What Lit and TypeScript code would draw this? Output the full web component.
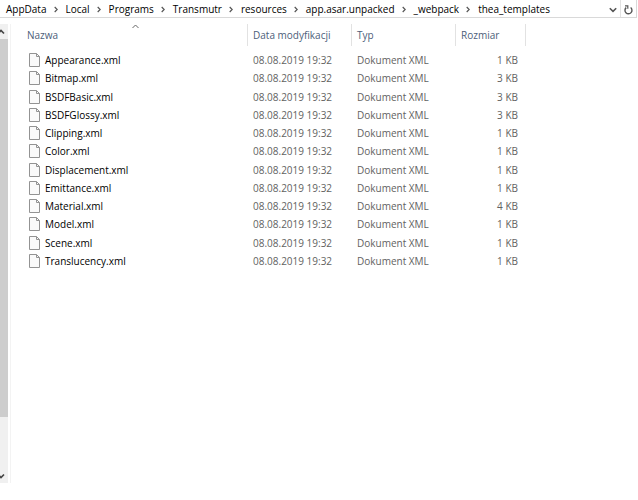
import { LitElement, html, css } from "lit";
import { customElement } from "lit/decorators.js";

interface FileRow {
  name: string;
  size: string;
}

const PATH = ["AppData", "Local", "Programs", "Transmutr", "resources", "app.asar.unpacked", "_webpack", "thea_templates"];

const FILES: FileRow[] = [
  { name: "Appearance.xml", size: "1 KB" },
  { name: "Bitmap.xml", size: "3 KB" },
  { name: "BSDFBasic.xml", size: "3 KB" },
  { name: "BSDFGlossy.xml", size: "3 KB" },
  { name: "Clipping.xml", size: "1 KB" },
  { name: "Color.xml", size: "1 KB" },
  { name: "Displacement.xml", size: "1 KB" },
  { name: "Emittance.xml", size: "1 KB" },
  { name: "Material.xml", size: "4 KB" },
  { name: "Model.xml", size: "1 KB" },
  { name: "Scene.xml", size: "1 KB" },
  { name: "Translucency.xml", size: "1 KB" },
];

@customElement("address-bar")
class AddressBar extends LitElement {
  static styles = css`
    :host {
      display: flex;
      height: 17px;
      margin-right: 1px;
      border-bottom: 1px solid #d9d9d9;
      border-right: 1px solid #d9d9d9;
    }
    .crumbs {
      flex: 1;
      display: flex;
      align-items: center;
      margin: 0;
      padding: 0 0 0 6px;
      list-style: none;
    }
    .crumb {
      display: flex;
      align-items: center;
    }
    .link {
      color: #000;
      text-decoration: none;
      white-space: nowrap;
    }
    .sep {
      width: 4px;
      height: 7px;
      margin: 2px 8px 0 7px;
    }
    .tool {
      display: flex;
      align-items: center;
      justify-content: center;
      width: 14px;
      padding: 2px 0 0;
      border: 0;
      background: none;
    }
    .refresh {
      width: 16px;
      border-left: 1px solid #e2e2e2;
    }
    svg {
      display: block;
      flex: none;
      fill: none;
    }
  `;

  render() {
    return html`
      <ol class="crumbs" aria-label="Path">
        ${PATH.map(
          (part, i) => html`<li class="crumb">
            ${i
              ? html`<svg class="sep" viewBox="0 0 4 7" aria-hidden="true">
                  <path d="M.7 1 3.2 3.5.7 6" stroke="#555" stroke-width="1.2" />
                </svg>`
              : null}
            <a class="link" href="#">${part}</a>
          </li>`
        )}
      </ol>
      <button class="tool" aria-label="Previous locations">
        <svg width="8" height="6" viewBox="0 0 8 6"><path d="M.8 1.2 4 4.4 7.2 1.2" stroke="#555" stroke-width="1.6" /></svg>
      </button>
      <button class="tool refresh" aria-label="Refresh">
        <svg width="9" height="10" viewBox="0 0 9 10">
          <path d="M6.6 2.5A3.5 3.5 0 1 1 2.2 2.6" stroke="#555" stroke-width="1.4" />
          <path d="M1 .8H3.8V3.8" stroke="#555" stroke-width="1.2" />
        </svg>
      </button>
    `;
  }
}

@customElement("scroll-rail")
class ScrollRail extends LitElement {
  static styles = css`
    :host {
      display: flex;
      flex-direction: column;
      width: 8px;
      background: #f0f0f0;
    }
    .arrow {
      display: flex;
      align-items: center;
      height: 15px;
      padding: 0;
      border: 0;
      background: none;
    }
    .track {
      flex: 1;
    }
    .thumb {
      height: 88%;
      background: #cdcdcd;
    }
    svg {
      display: block;
      fill: none;
    }
  `;

  render() {
    return html`
      <button class="arrow" aria-label="Scroll up">
        <svg width="5" height="6" viewBox="0 0 5 6"><path d="M-2 4.5 1 1.5 4 4.5" stroke="#444" stroke-width="1.7" /></svg>
      </button>
      <div class="track"><div class="thumb"></div></div>
      <button class="arrow" aria-label="Scroll down">
        <svg width="5" height="6" viewBox="0 0 5 6"><path d="M-2 1.5 1 4.5 4 1.5" stroke="#444" stroke-width="1.7" /></svg>
      </button>
    `;
  }
}

@customElement("file-table")
class FileTable extends LitElement {
  static styles = css`
    :host {
      display: block;
    }
    table {
      table-layout: fixed;
      width: 504px;
      height: 246px;
      border-collapse: separate;
      border-spacing: 0;
    }
    .name-col {
      width: 226px;
    }
    .mid-col {
      width: 104px;
    }
    .size-col {
      width: 70px;
    }
    th {
      position: relative;
      height: 22px;
      padding: 0 0 0 5px;
      border-right: 1px solid #e2e2e2;
      color: #4c607a;
      font-weight: 400;
      text-align: left;
      white-space: nowrap;
    }
    .sort {
      position: absolute;
      top: 0;
      left: 50%;
      margin-left: -3px;
    }
    td {
      padding: 0 0 0 5px;
      color: #626262;
      white-space: nowrap;
    }
    .gap td {
      height: 5px;
      padding: 0;
    }
    .size {
      padding: 0 8px 0 0;
      text-align: right;
    }
    .file {
      display: flex;
      align-items: center;
      gap: 5px;
      padding-left: 2px;
      color: #000;
    }
    svg {
      display: block;
      fill: none;
    }
  `;

  render() {
    return html`
      <table>
        <colgroup>
          <col class="name-col" />
          <col class="mid-col" />
          <col class="mid-col" />
          <col class="size-col" />
        </colgroup>
        <thead>
          <tr>
            <th scope="col" aria-sort="ascending">
              Nazwa
              <svg class="sort" width="7" height="5" viewBox="0 0 7 5"><path d="M.5 4 3.5 1 6.5 4" stroke="#666" /></svg>
            </th>
            <th scope="col">Data modyfikacji</th>
            <th scope="col">Typ</th>
            <th scope="col">Rozmiar</th>
          </tr>
          <tr class="gap"><td colspan="4"></td></tr>
        </thead>
        <tbody>
          ${FILES.map(
            (f) => html`<tr>
              <td>
                <div class="file">
                  <svg width="11" height="14" viewBox="0 0 11 14" aria-hidden="true">
                    <path d="M.5.5H7.5L10.5 3.5V13.5H.5Z" fill="#fafafa" stroke="#939393" />
                    <path d="M7.5.5V3.5H10.5" stroke="#939393" />
                  </svg>
                  <span>${f.name}</span>
                </div>
              </td>
              <td>08.08.2019 19:32</td>
              <td>Dokument XML</td>
              <td class="size">${f.size}</td>
            </tr>`
          )}
        </tbody>
      </table>
    `;
  }
}

@customElement("app-root")
class AppRoot extends LitElement {
  static styles = css`
    :host {
      display: flex;
      flex-direction: column;
      box-sizing: border-box;
      min-height: 100vh;
      padding-bottom: 17px;
      background: #fff;
      font: 10px/14px "Open Sans", "Noto Sans", sans-serif;
    }
    .body {
      flex: 1;
      display: flex;
      margin-top: 6px;
    }
    .pane {
      flex: 1;
      margin-left: 2px;
      padding-left: 11px;
      border-left: 1px solid #f3f3f3;
    }
  `;

  render() {
    return html`
      <address-bar></address-bar>
      <main class="body">
        <scroll-rail></scroll-rail>
        <file-table class="pane"></file-table>
      </main>
    `;
  }
}
